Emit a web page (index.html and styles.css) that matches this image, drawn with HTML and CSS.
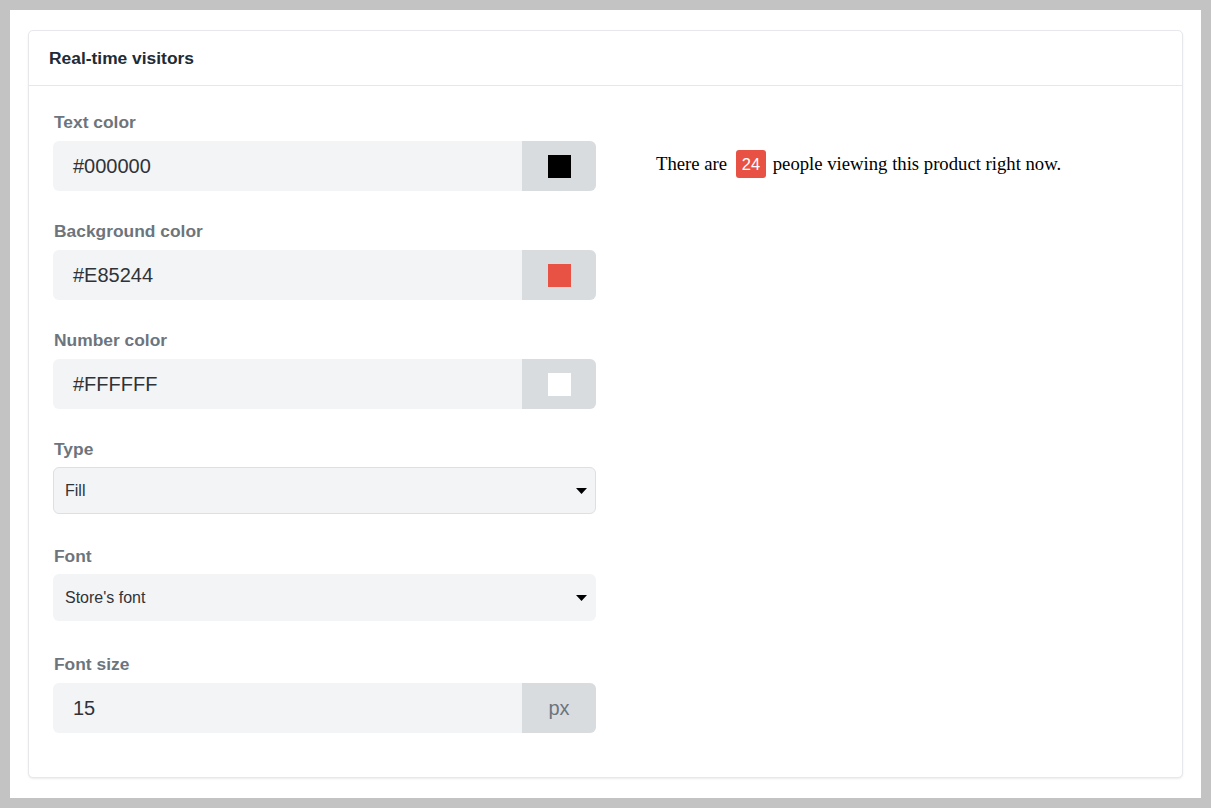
FILE: index.html
```html
<!DOCTYPE html>
<html>
<head>
<meta charset="utf-8">
<link rel="stylesheet" href="styles.css">
</head>
<body>
<div class="frame">
  <div class="card">
    <div class="card-header">Real-time visitors</div>
    <div class="card-body">
      <div class="form-col">
        <div class="group">
          <label class="lbl">Text color</label>
          <div class="input">
            <span class="value">#000000</span>
            <span class="addon"><span class="swatch sw-black"></span></span>
          </div>
        </div>
        <div class="group">
          <label class="lbl">Background color</label>
          <div class="input">
            <span class="value">#E85244</span>
            <span class="addon"><span class="swatch sw-red"></span></span>
          </div>
        </div>
        <div class="group">
          <label class="lbl">Number color</label>
          <div class="input">
            <span class="value">#FFFFFF</span>
            <span class="addon"><span class="swatch sw-white"></span></span>
          </div>
        </div>
        <div class="group group-select">
          <label class="lbl">Type</label>
          <div class="select bordered">
            <span>Fill</span>
            <svg class="caret" width="11" height="6" viewBox="0 0 11 6"><path d="M0 0H11L5.5 6Z" fill="#000"/></svg>
          </div>
        </div>
        <div class="group group-select">
          <label class="lbl">Font</label>
          <div class="select">
            <span>Store's font</span>
            <svg class="caret" width="11" height="6" viewBox="0 0 11 6"><path d="M0 0H11L5.5 6Z" fill="#000"/></svg>
          </div>
        </div>
        <div class="group last">
          <label class="lbl">Font size</label>
          <div class="input">
            <span class="value">15</span>
            <span class="addon addon-text">px</span>
          </div>
        </div>
      </div>
      <div class="preview-col">
        <p class="preview">There are <span class="badge">24</span> people viewing this product right now.</p>
      </div>
    </div>
  </div>
</div>
</body>
</html>
```

FILE: styles.css
```css
html, body {
  margin: 0;
  padding: 0;
}
body {
  background: #c3c3c3;
  padding: 10px;
  font-family: "Liberation Sans", Arial, sans-serif;
}
.frame {
  background: #ffffff;
  height: 788px;
  box-sizing: border-box;
  padding: 20px 18px;
}
.card {
  background: #fff;
  border: 1px solid #e6e8eb;
  border-radius: 5px;
  box-shadow: 0 1px 2px rgba(0, 0, 0, 0.08);
  height: 748px;
  box-sizing: border-box;
}
.card-header {
  height: 55px;
  box-sizing: border-box;
  border-bottom: 1px solid #e3e8ee;
  padding: 0 20px;
  display: flex;
  align-items: center;
  font-size: 17.4px;
  font-weight: bold;
  color: #212b35;
}
.card-body {
  display: grid;
  grid-template-columns: 543px 1fr;
  column-gap: 60px;
  padding: 25px 24px 0 24px;
}
.group {
  margin-bottom: 29px;
}
.group.last {
  margin-bottom: 0;
  padding-top: 1px;
}
.group-select {
  margin-bottom: 31px;
}
.lbl {
  display: block;
  font-size: 17.4px;
  font-weight: bold;
  line-height: 20px;
  color: #6c757d;
  padding-top: 1px;
  margin-bottom: 9px;
  padding-left: 1px;
}
.group-select .lbl {
  margin-bottom: 8px;
}
.input {
  display: flex;
  height: 50px;
  background: #f3f4f6;
  border-radius: 6px;
  overflow: hidden;
}
.value {
  flex: 1;
  display: flex;
  align-items: center;
  padding-left: 20px;
  font-size: 20px;
  color: #2f3338;
}
.addon {
  width: 74px;
  background: #d9dcdf;
  display: flex;
  align-items: center;
  justify-content: center;
}
.addon-text {
  font-size: 20px;
  color: #6c757d;
}
.swatch {
  width: 23px;
  height: 23px;
  display: block;
}
.sw-black { background: #000000; }
.sw-red { background: #e85244; }
.sw-white { background: #ffffff; }
.select {
  height: 47px;
  box-sizing: border-box;
  background: #f3f4f6;
  border-radius: 6px;
  display: flex;
  align-items: center;
  justify-content: space-between;
  padding: 0 9px 0 12px;
  font-size: 16px;
  color: #2f3338;
}
.select.bordered {
  border: 1px solid #dcdfe3;
  padding-left: 11px;
  padding-right: 8px;
}
.caret {
  display: block;
}
.preview-col {
  padding-top: 39px;
}
.preview {
  margin: 0;
  font-family: "Liberation Serif", "Times New Roman", serif;
  font-size: 18.7px;
  line-height: 28px;
  color: #000;
}
.badge {
  display: inline-block;
  vertical-align: middle;
  height: 28px;
  line-height: 28px;
  padding: 0 6px;
  margin: -4px 2px 0 4px;
  background: #e85244;
  color: #fff;
  border-radius: 3px;
  font-family: "Liberation Sans", Arial, sans-serif;
  font-size: 16.5px;
}
```
